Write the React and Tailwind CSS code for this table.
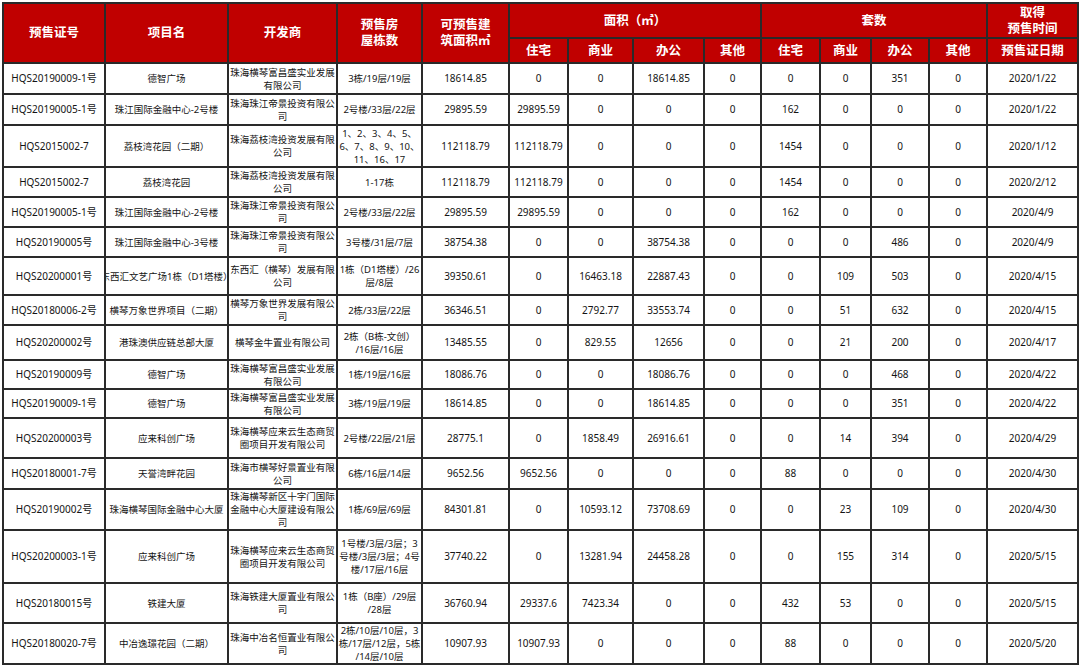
import React from "react";

const cols = [102, 123, 109, 85, 87, 59, 65, 71, 57, 59, 51, 58, 58, 91];

// 预售证号, 项目名, 开发商, 栋数, 可售面积, 面积x4, 套数x4, 日期, 行高
const rows = [
  ["HQS20190009-1号", "德智广场", "珠海横琴富昌盛实业发展\n有限公司", "3栋/19层/19层", "18614.85", "0", "0", "18614.85", "0", "0", "0", "351", "0", "2020/1/22", 31],
  ["HQS20190005-1号", "珠江国际金融中心-2号楼", "珠海珠江帝景投资有限公\n司", "2号楼/33层/22层", "29895.59", "29895.59", "0", "0", "0", "162", "0", "0", "0", "2020/1/22", 31],
  ["HQS2015002-7", "荔枝湾花园（二期）", "珠海荔枝湾投资发展有限\n公司", "1、2、3、4、5、\n6、7、8、9、10、\n11、16、17", "112118.79", "112118.79", "0", "0", "0", "1454", "0", "0", "0", "2020/1/12", 42],
  ["HQS2015002-7", "荔枝湾花园", "珠海荔枝湾投资发展有限\n公司", "1-17栋", "112118.79", "112118.79", "0", "0", "0", "1454", "0", "0", "0", "2020/2/12", 30],
  ["HQS20190005-1号", "珠江国际金融中心-2号楼", "珠海珠江帝景投资有限公\n司", "2号楼/33层/22层", "29895.59", "29895.59", "0", "0", "0", "162", "0", "0", "0", "2020/4/9", 30],
  ["HQS20190005号", "珠江国际金融中心-3号楼", "珠海珠江帝景投资有限公\n司", "3号楼/31层/7层", "38754.38", "0", "0", "38754.38", "0", "0", "0", "486", "0", "2020/4/9", 30],
  ["HQS20200001号", "东西汇文艺广场1栋（D1塔楼）", "东西汇（横琴）发展有限\n公司", "1栋（D1塔楼）/26\n层/8层", "39350.61", "0", "16463.18", "22887.43", "0", "0", "109", "503", "0", "2020/4/15", 38],
  ["HQS20180006-2号", "横琴万象世界项目（二期）", "横琴万象世界发展有限公\n司", "2栋/33层/22层", "36346.51", "0", "2792.77", "33553.74", "0", "0", "51", "632", "0", "2020/4/15", 30],
  ["HQS20200002号", "港珠澳供应链总部大厦", "横琴金牛置业有限公司", "2栋（B栋-文创）\n/16层/16层", "13485.55", "0", "829.55", "12656", "0", "0", "21", "200", "0", "2020/4/17", 35],
  ["HQS20190009号", "德智广场", "珠海横琴富昌盛实业发展\n有限公司", "1栋/19层/16层", "18086.76", "0", "0", "18086.76", "0", "0", "0", "468", "0", "2020/4/22", 29],
  ["HQS20190009-1号", "德智广场", "珠海横琴富昌盛实业发展\n有限公司", "3栋/19层/19层", "18614.85", "0", "0", "18614.85", "0", "0", "0", "351", "0", "2020/4/22", 29],
  ["HQS20200003号", "应来科创广场", "珠海横琴应来云生态商贸\n圈项目开发有限公司", "2号楼/22层/21层", "28775.1", "0", "1858.49", "26916.61", "0", "0", "14", "394", "0", "2020/4/29", 40],
  ["HQS20180001-7号", "天誉湾畔花园", "珠海市横琴好景置业有限\n公司", "6栋/16层/14层", "9652.56", "9652.56", "0", "0", "0", "88", "0", "0", "0", "2020/4/30", 31],
  ["HQS20190002号", "珠海横琴国际金融中心大厦", "珠海横琴新区十字门国际\n金融中心大厦建设有限公\n司", "1栋/69层/69层", "84301.81", "0", "10593.12", "73708.69", "0", "0", "23", "109", "0", "2020/4/30", 39],
  ["HQS20200003-1号", "应来科创广场", "珠海横琴应来云生态商贸\n圈项目开发有限公司", "1号楼/3层/3层；3\n号楼/3层/3层；4号\n楼/17层/16层", "37740.22", "0", "13281.94", "24458.28", "0", "0", "155", "314", "0", "2020/5/15", 53],
  ["HQS20180015号", "铁建大厦", "珠海铁建大厦置业有限公\n司", "1栋（B座）/29层\n/28层", "36760.94", "29337.6", "7423.34", "0", "0", "432", "53", "0", "0", "2020/5/15", 40],
  ["HQS20180020-7号", "中冶逸璟花园（二期）", "珠海中冶名恒置业有限公\n司", "2栋/10层/10层，3\n栋/17层/12层，5栋\n/14层/10层", "10907.93", "10907.93", "0", "0", "0", "88", "0", "0", "0", "2020/5/20", 40],
];

const rowH = {
  31: "h-[31px]",
  42: "h-[42px]",
  30: "h-[30px]",
  38: "h-[38px]",
  35: "h-[35px]",
  29: "h-[29px]",
  40: "h-[40px]",
  39: "h-[39px]",
  53: "h-[53px]",
};

const colW = [
  "w-[102px]", "w-[123px]", "w-[109px]", "w-[85px]", "w-[87px]", "w-[59px]", "w-[65px]",
  "w-[71px]", "w-[57px]", "w-[59px]", "w-[51px]", "w-[58px]", "w-[58px]", "w-[91px]",
];

function Th({ children, ...rest }) {
  return (
    <th
      {...rest}
      className="border-2 border-[#2a2a2a] bg-[#c00000] p-0 text-center align-middle text-[12.5px] font-bold leading-[16px] text-white"
    >
      <div className="whitespace-pre">{children}</div>
    </th>
  );
}

function Td({ children, small }) {
  return (
    <td className="overflow-hidden border-2 border-[#2a2a2a] p-0 align-middle">
      <div
        className={
          small
            ? "flex justify-center whitespace-pre text-center text-[9.5px] leading-[13px] text-[#141414]"
            : "flex justify-center whitespace-pre text-center text-[10px] leading-[13px] text-[#141414]"
        }
      >
        {children}
      </div>
    </td>
  );
}

export default function App() {
  return (
    <div className="min-h-screen bg-white pl-[2px] pt-[2px] font-['Noto_Sans','Noto_Sans_CJK_SC',sans-serif]">
      <table className="w-[1076px] table-fixed border-collapse">
        <colgroup>
          {cols.map((_, i) => (
            <col key={i} className={colW[i]} />
          ))}
        </colgroup>
        <thead>
          <tr className="h-[35px]">
            <Th rowSpan={2}>预售证号</Th>
            <Th rowSpan={2}>项目名</Th>
            <Th rowSpan={2}>开发商</Th>
            <Th rowSpan={2}>{"预售房\n屋栋数"}</Th>
            <Th rowSpan={2}>{"可预售建\n筑面积㎡"}</Th>
            <Th colSpan={4}>面积（㎡）</Th>
            <Th colSpan={4}>套数</Th>
            <Th>{"取得\n预售时间"}</Th>
          </tr>
          <tr className="h-[25px]">
            <Th>住宅</Th>
            <Th>商业</Th>
            <Th>办公</Th>
            <Th>其他</Th>
            <Th>住宅</Th>
            <Th>商业</Th>
            <Th>办公</Th>
            <Th>其他</Th>
            <Th>预售证日期</Th>
          </tr>
        </thead>
        <tbody>
          {rows.map((r, i) => (
            <tr key={i} className={rowH[r[14]]}>
              {r.slice(0, 14).map((c, j) => (
                <Td key={j} small={j === 1 || j === 2 || j === 3}>
                  {c}
                </Td>
              ))}
            </tr>
          ))}
        </tbody>
      </table>
    </div>
  );
}
